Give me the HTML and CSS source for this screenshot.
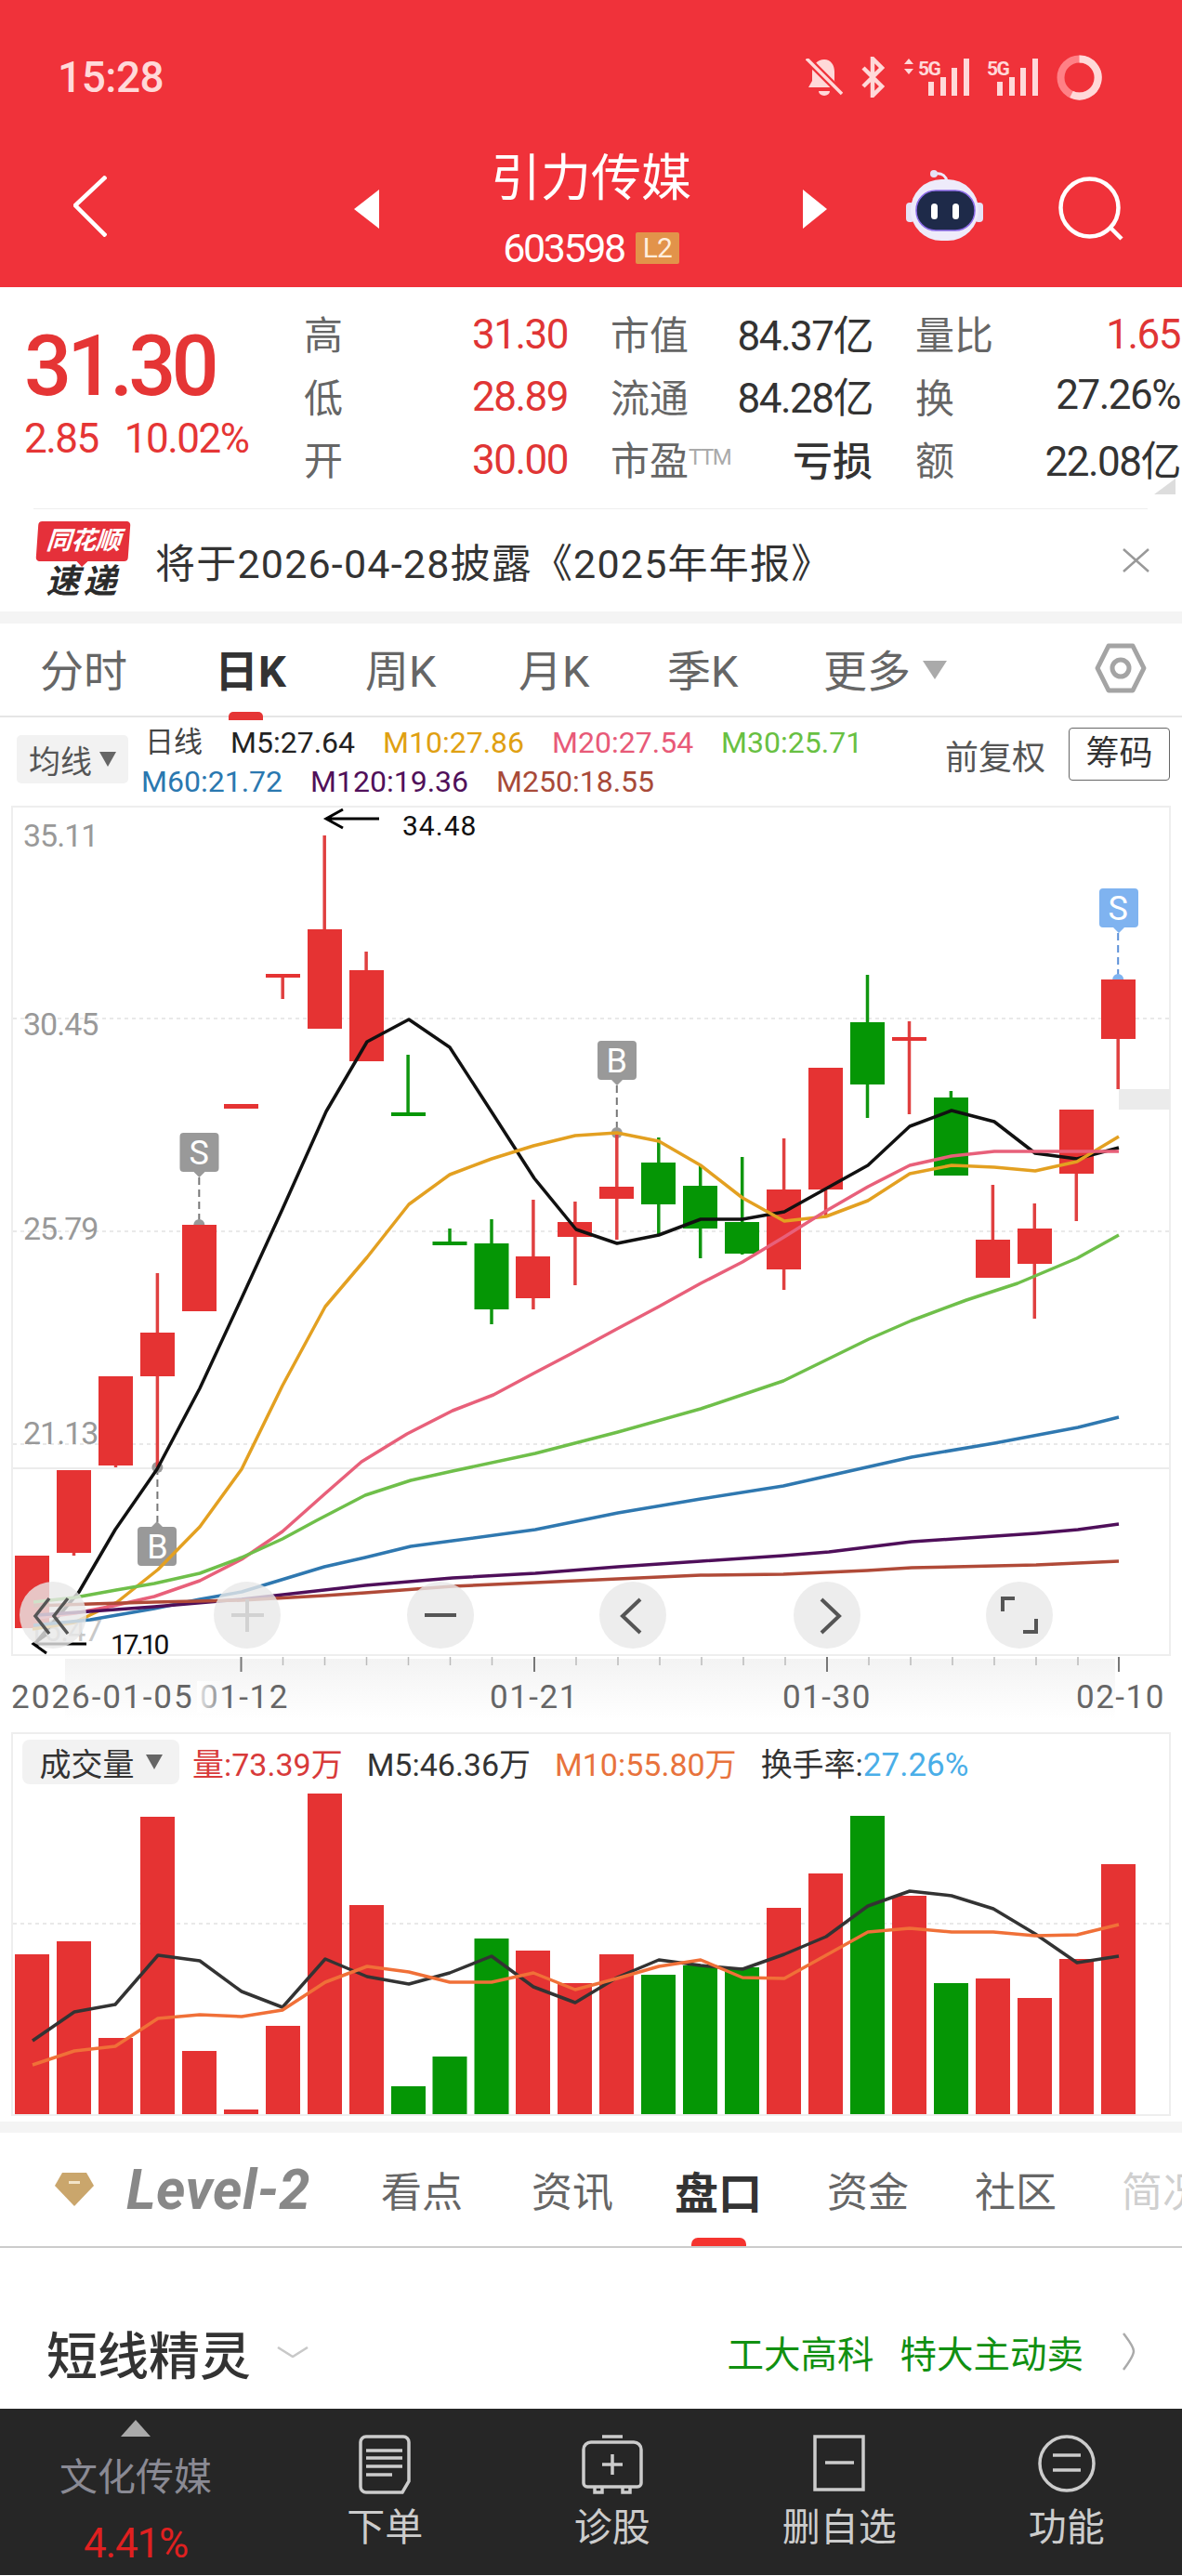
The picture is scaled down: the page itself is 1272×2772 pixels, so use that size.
FILE: index.html
```html
<!DOCTYPE html>
<html lang="zh-CN">
<head>
<meta charset="UTF-8">
<meta name="viewport" content="width=device-width, initial-scale=1.0">
<title>引力传媒</title>
<link rel="stylesheet" href="styles.css">
</head>
<body>

<div class="screen">

    <!-- red header -->
    <header class="top">
        <div class="status">
            <span class="clock">15:28</span>
            <div class="status-icons">
                <svg width="40" height="41" viewBox="0 0 40 41"><path class="st-fill" d="M20 1c7 0 11 6 11 13v10l4 7H3l4-7V14C7 7 13 1 20 1z"/><path class="st-fill" d="M14 35h12a6 5 0 0 1-12 0z"/><path class="st-gap" d="M1 0l38 38"/><path class="st-slash" d="M1 0l38 38"/></svg>
                <svg width="27" height="44" viewBox="0 0 27 44"><path class="st-bt" d="M3 12l20 20-10 10V2l10 10L3 32"/></svg>
                <svg width="71" height="41" viewBox="0 0 71 41"><path class="st-fill" d="M6 0l5 6H1zM6 17l5-6H1z"/><text class="st-text" x="16" y="18">5G</text><path class="st-fill" d="M27 25h6v15h-6zM40 20h6v20h-6zM52 10h6v30h-6zM65 0h6v40h-6z"/></svg>
                <svg width="56" height="41" viewBox="0 0 56 41"><text class="st-text" x="0" y="18">5G</text><path class="st-fill" d="M11 25h6v15h-6zM24 20h6v20h-6zM36 10h6v30h-6zM49 0h6v40h-6z"/></svg>
                <svg width="49" height="49" viewBox="0 0 49 49"><circle class="ring-back" cx="24.5" cy="24.5" r="20"/><path class="ring-front" d="M24.5 4.5a20 20 0 1 1-8.5 38"/></svg>
            </div>
        </div>
        <nav class="nav">
            <svg class="nav-back" width="36" height="66" viewBox="0 0 36 66"><path d="M35 1L2 32l33 33"/></svg>
            <div class="tri-left"></div>
            <div class="title-block">
                <div class="stock-name">引力传媒</div>
                <div class="stock-code"><span>603598</span><span class="l2">L2</span></div>
            </div>
            <div class="tri-right"></div>
            <svg class="robot" width="84" height="77" viewBox="0 0 84 77">
                <path class="robot-wire" d="M32 4c7-1 11 3 12 8"/>
                <circle class="robot-ball" cx="30" cy="4" r="4"/>
                <rect class="robot-ear" x="0" y="35" width="9" height="21" rx="4"/>
                <rect class="robot-ear" x="74" y="35" width="9" height="21" rx="4"/>
                <rect class="robot-head" x="5" y="10" width="73" height="66" rx="33"/>
                <rect class="robot-face" x="11" y="22" width="63" height="43" rx="21"/>
                <rect class="robot-eye" x="27" y="36" width="7" height="17" rx="3.5"/>
                <rect class="robot-eye" x="50" y="36" width="7" height="17" rx="3.5"/>
            </svg>
            <svg class="nav-search" width="70" height="70" viewBox="0 0 70 70"><circle cx="33.5" cy="33.5" r="31"/><path d="M56 55l12 12"/></svg>
        </nav>
    </header>

    <!-- quote block -->
    <section class="quote">
        <div class="price-box">
            <div class="price">31.30</div>
            <div class="change"><span>2.85</span><span>10.02%</span></div>
        </div>
        <div class="stats">
            <span class="st-label">高</span><span class="st-val red">31.30</span>
            <span class="st-label gap">市值</span><span class="st-val">84.37亿</span>
            <span class="st-label gap">量比</span><span class="st-val red">1.65</span>

            <span class="st-label">低</span><span class="st-val red">28.89</span>
            <span class="st-label gap">流通</span><span class="st-val">84.28亿</span>
            <span class="st-label gap">换</span><span class="st-val">27.26%</span>

            <span class="st-label">开</span><span class="st-val red">30.00</span>
            <span class="st-label gap">市盈<sup class="ttm">TTM</sup></span><span class="st-val loss">亏损</span>
            <span class="st-label gap">额</span><span class="st-val">22.08亿</span>
        </div>
        <div class="corner"></div>
    </section>
    <div class="rule"></div>

    <!-- notice -->
    <section class="notice">
        <div class="logo">
            <div class="logo-top"><span class="logo-skew">同花顺</span></div>
            <div class="logo-bottom">速递</div>
        </div>
        <div class="notice-text">将于2026-04-28披露《2025年年报》</div>
        <svg class="notice-close" width="29" height="26" viewBox="0 0 29 26"><path d="M1 1l27 24M28 1L1 25"/></svg>
    </section>
    <div class="band"></div>

    <!-- period tabs -->
    <div class="periods">
        <span class="period">分时</span>
        <span class="period on">日K</span>
        <span class="period">周K</span>
        <span class="period">月K</span>
        <span class="period">季K</span>
        <span class="period">更多<i class="more-tri"></i></span>
        <svg class="hex" width="56" height="54" viewBox="0 0 56 54"><path d="M15 3h26l12 24-12 24H15L3 27z"/><circle cx="28" cy="27" r="9"/></svg>
    </div>

    <!-- MA legend -->
    <div class="ma-legend">
        <div class="drop">均线<i class="drop-tri"></i></div>
        <div class="ma-lines">
            <div class="ma-row first">
                <span class="c-day">日线</span>
                <span class="c-m5">M5:27.64</span>
                <span class="c-m10">M10:27.86</span>
                <span class="c-m20">M20:27.54</span>
                <span class="c-m30">M30:25.71</span>
            </div>
            <div class="ma-row">
                <span class="c-m60">M60:21.72</span>
                <span class="c-m120">M120:19.36</span>
                <span class="c-m250">M250:18.55</span>
            </div>
        </div>
        <span class="adjust">前复权</span>
        <span class="chips">筹码</span>
    </div>

    <!-- candle chart, drawn in page coordinates -->
    <svg class="chart" width="1272" height="997" viewBox="0 866 1272 997">
        <defs>
            <linearGradient id="haze" x1="0" y1="0" x2="0" y2="1">
                <stop offset="0" stop-color="#f3f3f3"/>
                <stop offset="1" stop-color="#ffffff"/>
            </linearGradient>
            <linearGradient id="fade" x1="0" y1="0" x2="1" y2="0">
                <stop offset="0" stop-color="#ffffff" stop-opacity="0.9"/>
                <stop offset="1" stop-color="#ffffff" stop-opacity="0"/>
            </linearGradient>
        </defs>
        <rect x="70" y="1784" width="1130" height="66" fill="url(#haze)"/>
        <rect class="frame" x="13" y="867" width="1246" height="913"/>
        <path class="dash" d="M14 1095H1258M14 1324H1258M14 1553H1258"/>
        <path class="prev-close" d="M14 1579H1258"/>
        <rect class="last-tag" x="1204" y="1171" width="55" height="22"/>

        <text class="y-label" x="25" y="910">35.11</text>
        <text class="y-label" x="25" y="1113">30.45</text>
        <text class="y-label" x="25" y="1333">25.79</text>
        <text class="y-label" x="25" y="1553">21.13</text>
        <text class="y-label faint" x="29" y="1765">16.47</text>

        <!-- buy and sell marks sit under the candles and lines -->
        <g class="mark">
            <path class="mark-line" d="M214.3 1266V1317"/><circle cx="214.3" cy="1317" r="6"/>
            <path d="M197.5 1218h34a4 4 0 0 1 4 4v34a4 4 0 0 1-4 4h-11l-6 6-6-6h-11a4 4 0 0 1-4-4v-34a4 4 0 0 1 4-4z"/>
            <text x="214.3" y="1252">S</text>
        </g>
        <g class="mark">
            <path class="mark-line" d="M663.8 1167V1218"/><circle cx="663.8" cy="1218" r="6"/>
            <path d="M647 1119h34a4 4 0 0 1 4 4v34a4 4 0 0 1-4 4h-11l-6 6-6-6h-11a4 4 0 0 1-4-4v-34a4 4 0 0 1 4-4z"/>
            <text x="663.8" y="1153">B</text>
        </g>
        <g class="mark">
            <path class="mark-line" d="M169.4 1578V1637"/><circle cx="169.4" cy="1578" r="6"/>
            <path d="M152 1642h11l6-6 6 6h11a4 4 0 0 1 4 4v34a4 4 0 0 1-4 4h-34a4 4 0 0 1-4-4v-34a4 4 0 0 1 4-4z"/>
            <text x="169.4" y="1676">B</text>
        </g>
        <g class="mark blue">
            <path class="mark-line" d="M1203.2 1003V1053"/><circle cx="1203.2" cy="1053" r="6"/>
            <path d="M1187 955h34a4 4 0 0 1 4 4v34a4 4 0 0 1-4 4h-11l-6 6-6-6h-11a4 4 0 0 1-4-4v-34a4 4 0 0 1 4-4z"/>
            <text x="1203.2" y="989">S</text>
        </g>

        <g class="up">
            <rect x="16" y="1673" width="37" height="78"/>
            <path d="M79.5 1581V1673"/><rect x="61" y="1581" width="37" height="89"/>
            <path d="M124.5 1480V1578"/><rect x="106" y="1480" width="37" height="96"/>
            <path d="M169.4 1369V1578"/><rect x="151" y="1433" width="37" height="47"/>
            <rect x="196" y="1317" width="37" height="93"/>
            <rect x="241" y="1187" width="37" height="5"/>
            <path d="M304.2 1049V1074"/><rect x="286" y="1047" width="37" height="4"/>
            <path d="M349.2 898V1106"/><rect x="331" y="999" width="37" height="107"/>
            <path d="M394.1 1023V1141"/><rect x="376" y="1043" width="37" height="98"/>
            <path d="M573.9 1290V1408"/><rect x="555" y="1351" width="37" height="45"/>
            <path d="M618.9 1292V1382"/><rect x="600" y="1314" width="37" height="16"/>
            <path d="M663.8 1218V1333"/><rect x="645" y="1276" width="37" height="13"/>
            <path d="M843.6 1224V1387"/><rect x="825" y="1279" width="37" height="86"/>
            <path d="M888.6 1148V1307"/><rect x="870" y="1148" width="37" height="131"/>
            <path d="M978.5 1098V1198"/><rect x="960" y="1115" width="37" height="4"/>
            <path d="M1068.4 1274V1374"/><rect x="1050" y="1333" width="37" height="41"/>
            <path d="M1113.3 1294V1418"/><rect x="1095" y="1321" width="37" height="38"/>
            <path d="M1158.3 1193V1313"/><rect x="1140" y="1193" width="37" height="69"/>
            <path d="M1203.2 1053V1171"/><rect x="1185" y="1053" width="37" height="64"/>
        </g>
        <g class="down">
            <path d="M439.1 1134V1198"/><rect x="421" y="1196" width="37" height="4"/>
            <path d="M484 1321V1337"/><rect x="465.5" y="1335" width="37" height="4"/>
            <path d="M529 1311V1424"/><rect x="510.5" y="1337" width="37" height="71"/>
            <path d="M708.8 1223V1328"/><rect x="690" y="1250" width="37" height="45"/>
            <path d="M753.7 1253V1353"/><rect x="735" y="1275" width="37" height="46"/>
            <path d="M798.7 1244V1349"/><rect x="780" y="1314" width="37" height="34"/>
            <path d="M933.5 1048V1202"/><rect x="915" y="1099" width="37" height="67"/>
            <path d="M1023.4 1173V1264"/><rect x="1005" y="1180" width="37" height="84"/>
        </g>

        <polyline class="ma m5" points="40,1765 85,1712 124,1645 169,1580 215,1493 260,1396 304,1300 351,1195 395,1120 440,1096 484,1126 530,1197 575,1267 620,1322 664,1337 709,1328 754,1311 799,1311 844,1303 889,1278 934,1253 979,1211 1024,1194 1070,1206 1114,1240 1159,1246 1204,1234"/>
        <polyline class="ma m10" points="35,1752 80,1745 126,1723 170,1688 215,1642 260,1580 304,1490 350,1405 395,1352 440,1295 484,1263 529,1246 574,1232 619,1221 664,1218 709,1227 754,1253 799,1288 844,1313 889,1308 934,1291 979,1262 1024,1253 1070,1255 1114,1259 1159,1249 1204,1222"/>
        <polyline class="ma m20" points="40,1740 81,1735 122,1727 166,1717 215,1700 260,1677 304,1647 349,1607 389,1572 438,1542 487,1517 531,1500 574,1477 616,1455 664,1429 709,1405 754,1380 799,1357 844,1330 889,1302 934,1276 979,1253 1024,1243 1070,1238 1114,1238 1159,1238 1204,1238"/>
        <polyline class="ma m30" points="36,1723 81,1718 125,1710 166,1703 215,1692 260,1675 304,1655 341,1635 393,1608 442,1592 487,1582 576,1563 665,1540 754,1515 843,1485 890,1462 935,1440 981,1420 1040,1398 1095,1380 1159,1353 1204,1328"/>
        <polyline class="ma m60" points="36,1748 97,1742 166,1730 215,1720 260,1712 349,1685 393,1675 442,1663 487,1657 576,1645 665,1627 754,1612 843,1598 981,1567 1070,1552 1160,1535 1204,1524"/>
        <polyline class="ma m120" points="40,1737 97,1733 166,1728 260,1720 349,1710 393,1705 487,1697 576,1692 665,1685 754,1679 843,1673 892,1669 981,1658 1026,1655 1115,1649 1160,1645 1204,1639"/>
        <polyline class="ma m250" points="36,1727 97,1725 166,1723 260,1721 349,1716 393,1713 487,1706 576,1702 665,1698 754,1694 843,1693 933,1689 981,1686 1115,1683 1204,1679"/>

        <path class="hi-arrow" d="M408 880H351M369 870l-18 10 18 10"/>
        <text class="hi-text" x="433" y="898">34.48</text>
        <path class="hi-arrow" d="M93 1768H36M50 1758l-14 10 14 10"/>
        <text class="hi-text lo" x="119" y="1779">17.10</text>

        <!-- zoom and pan buttons -->
        <circle class="pan" cx="57" cy="1737" r="36"/>
        <circle class="pan" cx="266" cy="1737" r="36"/>
        <circle class="pan" cx="474" cy="1737" r="36"/>
        <circle class="pan" cx="681" cy="1737" r="36"/>
        <circle class="pan" cx="890" cy="1737" r="36"/>
        <circle class="pan" cx="1097" cy="1737" r="36"/>
        <path class="pan-icon thin" d="M53 1719l-15 19 15 19M73 1719l-15 19 15 19"/>
        <path class="pan-icon off" d="M266 1720v35M249 1737h35"/>
        <path class="pan-icon" d="M457 1737h34"/>
        <path class="pan-icon" d="M689 1720l-19 18 19 18"/>
        <path class="pan-icon" d="M884 1720l19 18-19 18"/>
        <path class="pan-icon" d="M1079 1733v-14h13M1115 1741v14h-14"/>

        <path class="tick" d="M304.5 1782v9M349.5 1782v9M394.5 1782v9M439.5 1782v9M484.5 1782v9M529.5 1782v9M620 1782v9M665 1782v9M710 1782v9M755 1782v9M800 1782v9M845 1782v9M935 1782v9M980 1782v9M1025 1782v9M1070 1782v9M1115 1782v9M1160 1782v9"/>
        <path class="tick major" d="M259.5 1782v16M575 1782v16M890 1782v16M1204 1782v16"/>

        <text class="date" x="215" y="1837">01-12</text>
        <rect x="212" y="1808" width="34" height="34" fill="url(#fade)"/>
        <text class="date first" x="12" y="1837">2026-01-05</text>
        <text class="date" x="527" y="1837">01-21</text>
        <text class="date" x="842" y="1837">01-30</text>
        <text class="date" x="1158" y="1837">02-10</text>
    </svg>

    <!-- volume panel -->
    <section class="vol">
        <div class="vol-legend">
            <div class="drop vol-drop">成交量<i class="drop-tri"></i></div>
            <span class="c-red">量:73.39万</span>
            <span class="c-dark">M5:46.36万</span>
            <span class="c-orange">M10:55.80万</span>
            <span class="c-dark">换手率:<b class="c-blue">27.26%</b></span>
        </div>
        <svg class="vol-bars" width="1244" height="349" viewBox="14 1925 1244 349">
            <path class="dash" d="M14 2069H1258"/>
            <g class="up">
                <rect x="16" y="2102" width="37" height="173"/>
                <rect x="61" y="2088" width="37" height="187"/>
                <rect x="106" y="2192" width="37" height="83"/>
                <rect x="151" y="1954" width="37" height="321"/>
                <rect x="196" y="2206" width="37" height="69"/>
                <rect x="241" y="2269" width="37" height="6"/>
                <rect x="286" y="2179" width="37" height="96"/>
                <rect x="331" y="1929" width="37" height="346"/>
                <rect x="376" y="2049" width="37" height="226"/>
                <rect x="555" y="2098" width="37" height="177"/>
                <rect x="600" y="2133" width="37" height="142"/>
                <rect x="645" y="2102" width="37" height="173"/>
                <rect x="825" y="2052" width="37" height="223"/>
                <rect x="870" y="2015" width="37" height="260"/>
                <rect x="960" y="2039" width="37" height="236"/>
                <rect x="1050" y="2128" width="37" height="147"/>
                <rect x="1095" y="2149" width="37" height="126"/>
                <rect x="1140" y="2107" width="37" height="168"/>
                <rect x="1185" y="2005" width="37" height="270"/>
            </g>
            <g class="down">
                <rect x="421" y="2244" width="37" height="31"/>
                <rect x="465.5" y="2212" width="37" height="63"/>
                <rect x="510.5" y="2085" width="37" height="190"/>
                <rect x="690" y="2124" width="37" height="151"/>
                <rect x="735" y="2114" width="37" height="161"/>
                <rect x="780" y="2116" width="37" height="159"/>
                <rect x="915" y="1953" width="37" height="322"/>
                <rect x="1005" y="2133" width="37" height="142"/>
            </g>
            <polyline class="ma v5" points="35,2195 80,2164 124,2156 170,2103 215,2109 260,2142 304,2159 350,2107 395,2126 440,2134 484,2122 529,2104 574,2137 619,2154 664,2127 709,2108 754,2114 799,2118 844,2102 889,2083 934,2050 979,2034 1024,2039 1069,2053 1114,2080 1159,2111 1204,2104"/>
            <polyline class="ma v10" points="35,2221 80,2206 124,2201 170,2171 215,2167 260,2169 304,2162 350,2132 395,2115 440,2121 484,2132 529,2132 574,2122 619,2140 664,2128 709,2115 754,2108 799,2127 844,2128 889,2103 934,2078 979,2074 1024,2078 1069,2078 1114,2082 1159,2081 1204,2070"/>
        </svg>
    </section>
    <div class="band low"></div>

    <!-- detail tabs -->
    <div class="details">
        <svg class="gem" width="42" height="36" viewBox="0 0 42 36"><path d="M8 0h26l8 14-21 22L0 14z"/><path class="gem-mark" d="M15 9h12v3H15z"/></svg>
        <span class="level2">Level-2</span>
        <span class="detail">看点</span>
        <span class="detail">资讯</span>
        <span class="detail on">盘口</span>
        <span class="detail">资金</span>
        <span class="detail">社区</span>
        <span class="detail fade">简况</span>
    </div>

    <!-- short line sprite -->
    <section class="sprite">
        <span class="sprite-name">短线精灵</span>
        <svg class="sprite-down" width="34" height="12" viewBox="0 0 34 12"><path d="M1 1l16 10L33 1"/></svg>
        <span class="sprite-tag">工大高科</span>
        <span class="sprite-tag second">特大主动卖</span>
        <svg class="sprite-more" width="14" height="41" viewBox="0 0 14 41"><path d="M1 1c6 8 11 14 11 19S7 32 1 40"/></svg>
    </section>

    <!-- bottom bar -->
    <footer class="bar">
        <div class="bar-index">
            <i class="bar-up"></i>
            <span class="index-name">文化传媒</span>
            <span class="index-pct">4.41%</span>
        </div>
        <div class="bar-item">
            <svg width="56" height="64" viewBox="0 0 56 64"><path d="M8 2h40a6 6 0 0 1 6 6v42l-7 12H8a6 6 0 0 1-6-6V8a6 6 0 0 1 6-6z"/><path d="M8 17h39M8 25h39M8 34h39M8 43h28"/></svg>
            <span>下单</span>
        </div>
        <div class="bar-item">
            <svg width="66" height="64" viewBox="0 0 66 64"><path d="M22 2h22M10 8h46a8 8 0 0 1 8 8v36a4 4 0 0 1-4 4H6a4 4 0 0 1-4-4V16a8 8 0 0 1 8-8z"/><path d="M33 21v22M22 32h22M14 57v5h8v-5M44 57v5h8v-5"/></svg>
            <span>诊股</span>
        </div>
        <div class="bar-item">
            <svg width="56" height="64" viewBox="0 0 56 64"><path d="M2 2h52v57H2z"/><path d="M13 30h31"/></svg>
            <span>删自选</span>
        </div>
        <div class="bar-item">
            <svg width="62" height="64" viewBox="0 0 62 64"><circle cx="31" cy="31" r="29"/><path d="M16 22h30M16 38h30"/></svg>
            <span>功能</span>
        </div>
    </footer>

</div>

</body>
</html>
```

FILE: styles.css
```css
body {
    margin: 0;
    background-color: #fff;
    font-family: Roboto, "Noto Sans CJK SC", sans-serif;
    color: #333;
}

.screen {
    width: 1272px;
    height: 2772px;
    overflow: hidden;
}

svg {
    display: block;
}

/* header */
.top {
    height: 309px;
    background-color: #f0323a;
}

.status {
    display: flex;
    align-items: center;
    height: 50px;
    padding: 58px 86px 0 62px;
}

.clock {
    font-size: 46px;
    font-weight: 500;
    letter-spacing: -0.5px;
    color: #ffd9d9;
}

.status-icons {
    display: flex;
    align-items: center;
    gap: 19px;
    margin-left: auto;
}

.st-fill {
    fill: #ffd9d9;
}

.st-gap {
    fill: none;
    stroke: #f0323a;
    stroke-width: 8;
}

.st-slash {
    fill: none;
    stroke: #ffd9d9;
    stroke-width: 3.5;
}

.st-bt {
    fill: none;
    stroke: #ffd9d9;
    stroke-width: 4.5;
}

.st-text {
    font-size: 21px;
    font-weight: 700;
    letter-spacing: -1.5px;
    fill: #ffd9d9;
}

.ring-back {
    fill: none;
    stroke: #ff8086;
    stroke-width: 8;
}

.ring-front {
    fill: none;
    stroke: #ffd9d9;
    stroke-width: 8;
}

.nav {
    display: flex;
    align-items: flex-start;
    height: 146px;
    margin-top: 48px;
    padding-left: 79px;
}

.nav-back {
    margin-top: 33px;
}

.nav-back path,
.nav-search circle,
.nav-search path {
    fill: none;
    stroke: #fff;
    stroke-width: 4.5;
}

.tri-left {
    width: 0;
    height: 0;
    margin: 48px 0 0 266px;
    border-top: 21px solid transparent;
    border-bottom: 21px solid transparent;
    border-right: 27px solid #fff;
}

.tri-right {
    width: 0;
    height: 0;
    margin-top: 48px;
    border-top: 21px solid transparent;
    border-bottom: 21px solid transparent;
    border-left: 26px solid #fff;
}

.title-block {
    width: 456px;
    text-align: center;
    color: #fff;
}

.stock-name {
    height: 60px;
    margin-top: 7px;
    font-size: 54px;
    line-height: 60px;
}

.stock-code {
    display: flex;
    justify-content: center;
    align-items: center;
    gap: 12px;
    height: 34px;
    margin-top: 27px;
    font-size: 43px;
    letter-spacing: -2.4px;
}

.l2 {
    width: 47px;
    height: 34px;
    border-radius: 2px;
    background-color: #e2934a;
    font-size: 30px;
    line-height: 34px;
    letter-spacing: -1px;
    color: #ffeedd;
}

.robot {
    margin: 27px 0 0 85px;
}

.robot-wire {
    fill: none;
    stroke: #eeeafb;
    stroke-width: 3;
}

.robot-ball,
.robot-ear {
    fill: #e6e2f6;
}

.robot-head {
    fill: #eeebfa;
}

.robot-face {
    fill: #1e2a49;
    stroke: #8c6be8;
    stroke-width: 1.5;
}

.robot-eye {
    fill: #fff;
}

.nav-search {
    margin: 34px 0 0 80px;
}

/* quote */
.quote {
    position: relative;
    display: flex;
    height: 223px;
    padding-top: 15px;
}

.price-box {
    width: 300px;
    padding: 36px 0 0 26px;
    color: #e53535;
}

.price {
    font-size: 90px;
    font-weight: 500;
    line-height: 70px;
    letter-spacing: -5px;
}

.change {
    display: flex;
    gap: 28px;
    margin-top: 17px;
    font-size: 44px;
    line-height: 50px;
    letter-spacing: -1.5px;
}

.stats {
    display: grid;
    grid-template-columns: 123px 161px 178px 150px 146px 185px;
    grid-auto-rows: 67.5px;
    align-items: center;
    margin-left: 1px;
    width: 943px;
}

.st-label {
    font-size: 42px;
    white-space: nowrap;
    color: #666;
}

.st-label.gap {
    padding-left: 46px;
}

.ttm {
    font-size: 24px;
    letter-spacing: -1.5px;
    color: #aaa;
    vertical-align: 11px;
    line-height: 0;
}

.st-val {
    font-size: 44px;
    letter-spacing: -1.5px;
    text-align: right;
    white-space: nowrap;
}

.st-val.red {
    padding-top: 4px;
    color: #e03535;
}

.st-val.loss {
    font-size: 43px;
    font-weight: 500;
    letter-spacing: 0;
}

.corner {
    position: absolute;
    top: 206px;
    left: 1242px;
    width: 23px;
    height: 17px;
    background-color: #ddd;
    clip-path: polygon(100% 0, 100% 100%, 0 100%);
}

.rule {
    height: 1px;
    margin: 0 37px 0 36px;
    background-color: #eee;
}

/* notice */
.notice {
    display: flex;
    align-items: center;
    height: 110px;
    padding-left: 39px;
}

.logo {
    display: flex;
    flex-direction: column;
    align-items: center;
    width: 101px;
    font-style: italic;
    font-weight: 700;
}

.logo-top {
    position: relative;
    width: 99px;
    height: 43px;
    border-radius: 4px;
    background-color: #e5303a;
    transform: skewX(-4deg);
    text-align: center;
}

.logo-top::after {
    content: "";
    position: absolute;
    top: 43px;
    left: 44px;
    border-top: 6px solid #e5303a;
    border-left: 6px solid transparent;
    border-right: 6px solid transparent;
}

.logo-skew {
    font-size: 27px;
    line-height: 43px;
    letter-spacing: -0.5px;
    color: #fff;
}

.logo-bottom {
    height: 38px;
    margin-top: 3px;
    font-size: 36px;
    line-height: 38px;
    letter-spacing: 4px;
    color: #2b2b2b;
}

.notice-text {
    margin-left: 27px;
    font-size: 43px;
    letter-spacing: 1.2px;
    color: #333;
}

.notice-close {
    margin-left: auto;
    margin-right: 35px;
}

.notice-close path {
    fill: none;
    stroke: #999;
    stroke-width: 2.5;
}

.band {
    height: 13px;
    background-color: #f4f4f4;
}

.band.low {
    height: 12px;
}

/* period tabs */
.periods {
    position: relative;
    display: grid;
    grid-template-columns: 188px 162px 165px 160px 168px 292px 56px;
    align-items: center;
    height: 95px;
    padding: 0 0 4px 43px;
    border-bottom: 2px solid #e5e5e5;
}

.period {
    font-size: 47px;
    color: #666;
    white-space: nowrap;
}

.period.on {
    position: relative;
    font-weight: 700;
    color: #333;
}

.period.on::after {
    content: "";
    position: absolute;
    left: 15px;
    bottom: -22px;
    width: 37px;
    height: 9px;
    border-radius: 5px 5px 0 0;
    background-color: #e53535;
}

.more-tri {
    display: inline-block;
    margin-left: 13px;
    vertical-align: 8px;
    border-top: 20px solid #aaa;
    border-left: 13px solid transparent;
    border-right: 13px solid transparent;
}

.hex path,
.hex circle {
    fill: none;
    stroke: #a4a4a4;
    stroke-width: 5;
    stroke-linejoin: round;
}

/* MA legend */
.ma-legend {
    display: flex;
    align-items: flex-start;
    height: 95px;
    padding-left: 18px;
}

.drop {
    display: flex;
    align-items: center;
    justify-content: center;
    gap: 8px;
    width: 120px;
    height: 52px;
    margin-top: 19px;
    border-radius: 5px;
    background-color: #f2f2f2;
    font-size: 34px;
    color: #555;
}

.drop-tri {
    border-top: 16px solid #666;
    border-left: 9px solid transparent;
    border-right: 9px solid transparent;
}

.ma-lines {
    margin: 6px 0 0 14px;
}

.ma-row {
    display: flex;
    gap: 30px;
    height: 42px;
    font-size: 32px;
    line-height: 42px;
    white-space: nowrap;
}

.ma-row.first {
    padding-left: 4px;
}

.c-day {
    font-size: 31px;
    color: #444;
}

.c-m5 {
    color: #222;
}

.c-m10 {
    color: #e0a012;
}

.c-m20 {
    color: #e85a78;
}

.c-m30 {
    color: #68c042;
}

.c-m60 {
    color: #2a78b0;
}

.c-m120 {
    color: #50105a;
}

.c-m250 {
    color: #a84a38;
}

.adjust {
    margin: 22px 0 0 auto;
    font-size: 36px;
    line-height: 44px;
    color: #555;
}

.chips {
    width: 107px;
    height: 55px;
    margin: 11px 13px 0 25px;
    border: 1px solid #666;
    border-radius: 4px;
    font-size: 36px;
    line-height: 55px;
    text-align: center;
    color: #333;
}

/* chart */
.frame {
    fill: none;
    stroke: #eeeeee;
    stroke-width: 2;
}

.dash {
    fill: none;
    stroke: #e2e2e2;
    stroke-width: 1.5;
    stroke-dasharray: 4 4;
}

.prev-close {
    fill: none;
    stroke: #ececec;
    stroke-width: 2;
}

.last-tag {
    fill: #ebebeb;
}

.y-label {
    font-size: 34px;
    letter-spacing: -1px;
    fill: #999;
}

.y-label.faint {
    fill: #c8c8c8;
}

.up rect {
    fill: #e53333;
}

.up path {
    stroke: #e04040;
    stroke-width: 3.5;
}

.down rect {
    fill: #059605;
}

.down path {
    stroke: #0f960f;
    stroke-width: 3.5;
}

.ma {
    fill: none;
    stroke-width: 3.5;
    stroke-linejoin: round;
}

.m5 {
    stroke: #111;
}

.m10 {
    stroke: #e3a021;
}

.m20 {
    stroke: #e8607a;
}

.m30 {
    stroke: #6fbf4a;
}

.m60 {
    stroke: #2f78b0;
}

.m120 {
    stroke: #4f0f5a;
}

.m250 {
    stroke: #b04a38;
}

.v5 {
    stroke: #333;
}

.v10 {
    stroke: #f07038;
}

.mark path,
.mark circle {
    fill: #999;
}

.mark .mark-line {
    fill: none;
    stroke: #777;
    stroke-width: 2;
    stroke-dasharray: 8 5;
}

.mark text {
    font-size: 36px;
    text-anchor: middle;
    fill: #fff;
}

.mark.blue path,
.mark.blue circle {
    fill: #7fb3f0;
}

.mark.blue .mark-line {
    fill: none;
    stroke: #5b90d8;
}

.hi-arrow {
    fill: none;
    stroke: #000;
    stroke-width: 3;
}

.hi-text {
    font-size: 30px;
    letter-spacing: 1px;
    fill: #111;
}

.hi-text.lo {
    letter-spacing: -3px;
}

.pan {
    fill: #e8e8e8;
    fill-opacity: 0.8;
}

.pan-icon {
    fill: none;
    stroke: #555;
    stroke-width: 4;
}

.pan-icon.thin {
    stroke-width: 3.5;
}

.pan-icon.off {
    stroke: #d2d2d2;
}

.tick {
    fill: none;
    stroke: #bbb;
    stroke-width: 1.5;
}

.tick.major {
    stroke: #777;
    stroke-width: 2;
}

.date {
    font-size: 35px;
    letter-spacing: 1.5px;
    fill: #666;
}

.date.first {
    letter-spacing: 2px;
}

/* volume */
.vol {
    width: 1244px;
    margin: 0 0 6px 12px;
    border: 2px solid #eee;
}

.vol-legend {
    display: flex;
    align-items: center;
    gap: 26px;
    height: 60px;
    font-size: 34px;
    white-space: nowrap;
}

.vol-drop {
    flex: 0 0 auto;
    width: 169px;
    height: 48px;
    margin: 0 -12px 0 10px;
    border-radius: 8px;
    color: #333;
}

.vol-drop .drop-tri {
    margin-left: 4px;
}

.c-red {
    color: #d83a3a;
}

.c-dark {
    color: #333;
}

.c-orange {
    color: #e8733c;
}

.c-blue {
    font-size: 35px;
    font-weight: 400;
    color: #4aaee8;
}

/* detail tabs */
.details {
    display: grid;
    grid-template-columns: 77px 274px 162px 154px 164px 159px 158px 100px;
    align-items: center;
    height: 122px;
    padding-left: 59px;
    border-bottom: 2px solid #ccc;
    overflow: hidden;
}

.gem path {
    fill: #caa66c;
}

.gem .gem-mark {
    fill: #f2e4c8;
}

.level2 {
    font-size: 60px;
    font-style: italic;
    font-weight: 700;
    letter-spacing: 0.5px;
    color: #888;
}

.detail {
    font-size: 44px;
    color: #666;
    white-space: nowrap;
}

.detail.on {
    position: relative;
    font-size: 47px;
    font-weight: 700;
    color: #333;
}

.detail.on::after {
    content: "";
    position: absolute;
    left: 18px;
    bottom: -30px;
    width: 59px;
    height: 13px;
    border-radius: 7px 7px 0 0;
    background-color: #f5342f;
}

.detail.fade {
    color: #cfcfcf;
}

/* sprite row */
.sprite {
    display: flex;
    align-items: center;
    height: 173px;
    padding: 50px 50px 0 50px;
    box-sizing: border-box;
    white-space: nowrap;
}

.sprite-name {
    font-size: 55px;
    font-weight: 500;
    color: #333;
}

.sprite-down {
    margin: 0 0 0 28px;
}

.sprite-down path,
.sprite-more path {
    fill: none;
    stroke: #c8c8c8;
    stroke-width: 2.5;
}

.sprite-more path {
    stroke: #aaa;
}

.sprite-tag {
    margin-left: auto;
    font-size: 39.5px;
    color: #119011;
}

.sprite-tag.second {
    margin-left: 28px;
}

.sprite-more {
    margin-left: 42px;
}

/* bottom bar */
.bar {
    display: grid;
    grid-template-columns: 292px repeat(4, 244.5px);
    height: 179px;
    background-color: #262626;
}

.bar-index {
    display: flex;
    flex-direction: column;
    align-items: center;
    padding-top: 12px;
}

.bar-up {
    border-bottom: 18px solid #aaa;
    border-left: 16px solid transparent;
    border-right: 16px solid transparent;
}

.index-name {
    margin-top: 19px;
    font-size: 41px;
    line-height: 50px;
    color: #8a8a94;
}

.index-pct {
    margin-top: 21px;
    font-size: 44px;
    line-height: 50px;
    letter-spacing: -1.2px;
    color: #e02020;
}

.bar-item {
    display: flex;
    flex-direction: column;
    align-items: center;
    padding-top: 28px;
    font-size: 41px;
    line-height: 50px;
    color: #ccc;
}

.bar-item span {
    margin-top: 11px;
}

.bar-item path,
.bar-item circle {
    fill: none;
    stroke: #ccc;
    stroke-width: 3.5;
}
```
